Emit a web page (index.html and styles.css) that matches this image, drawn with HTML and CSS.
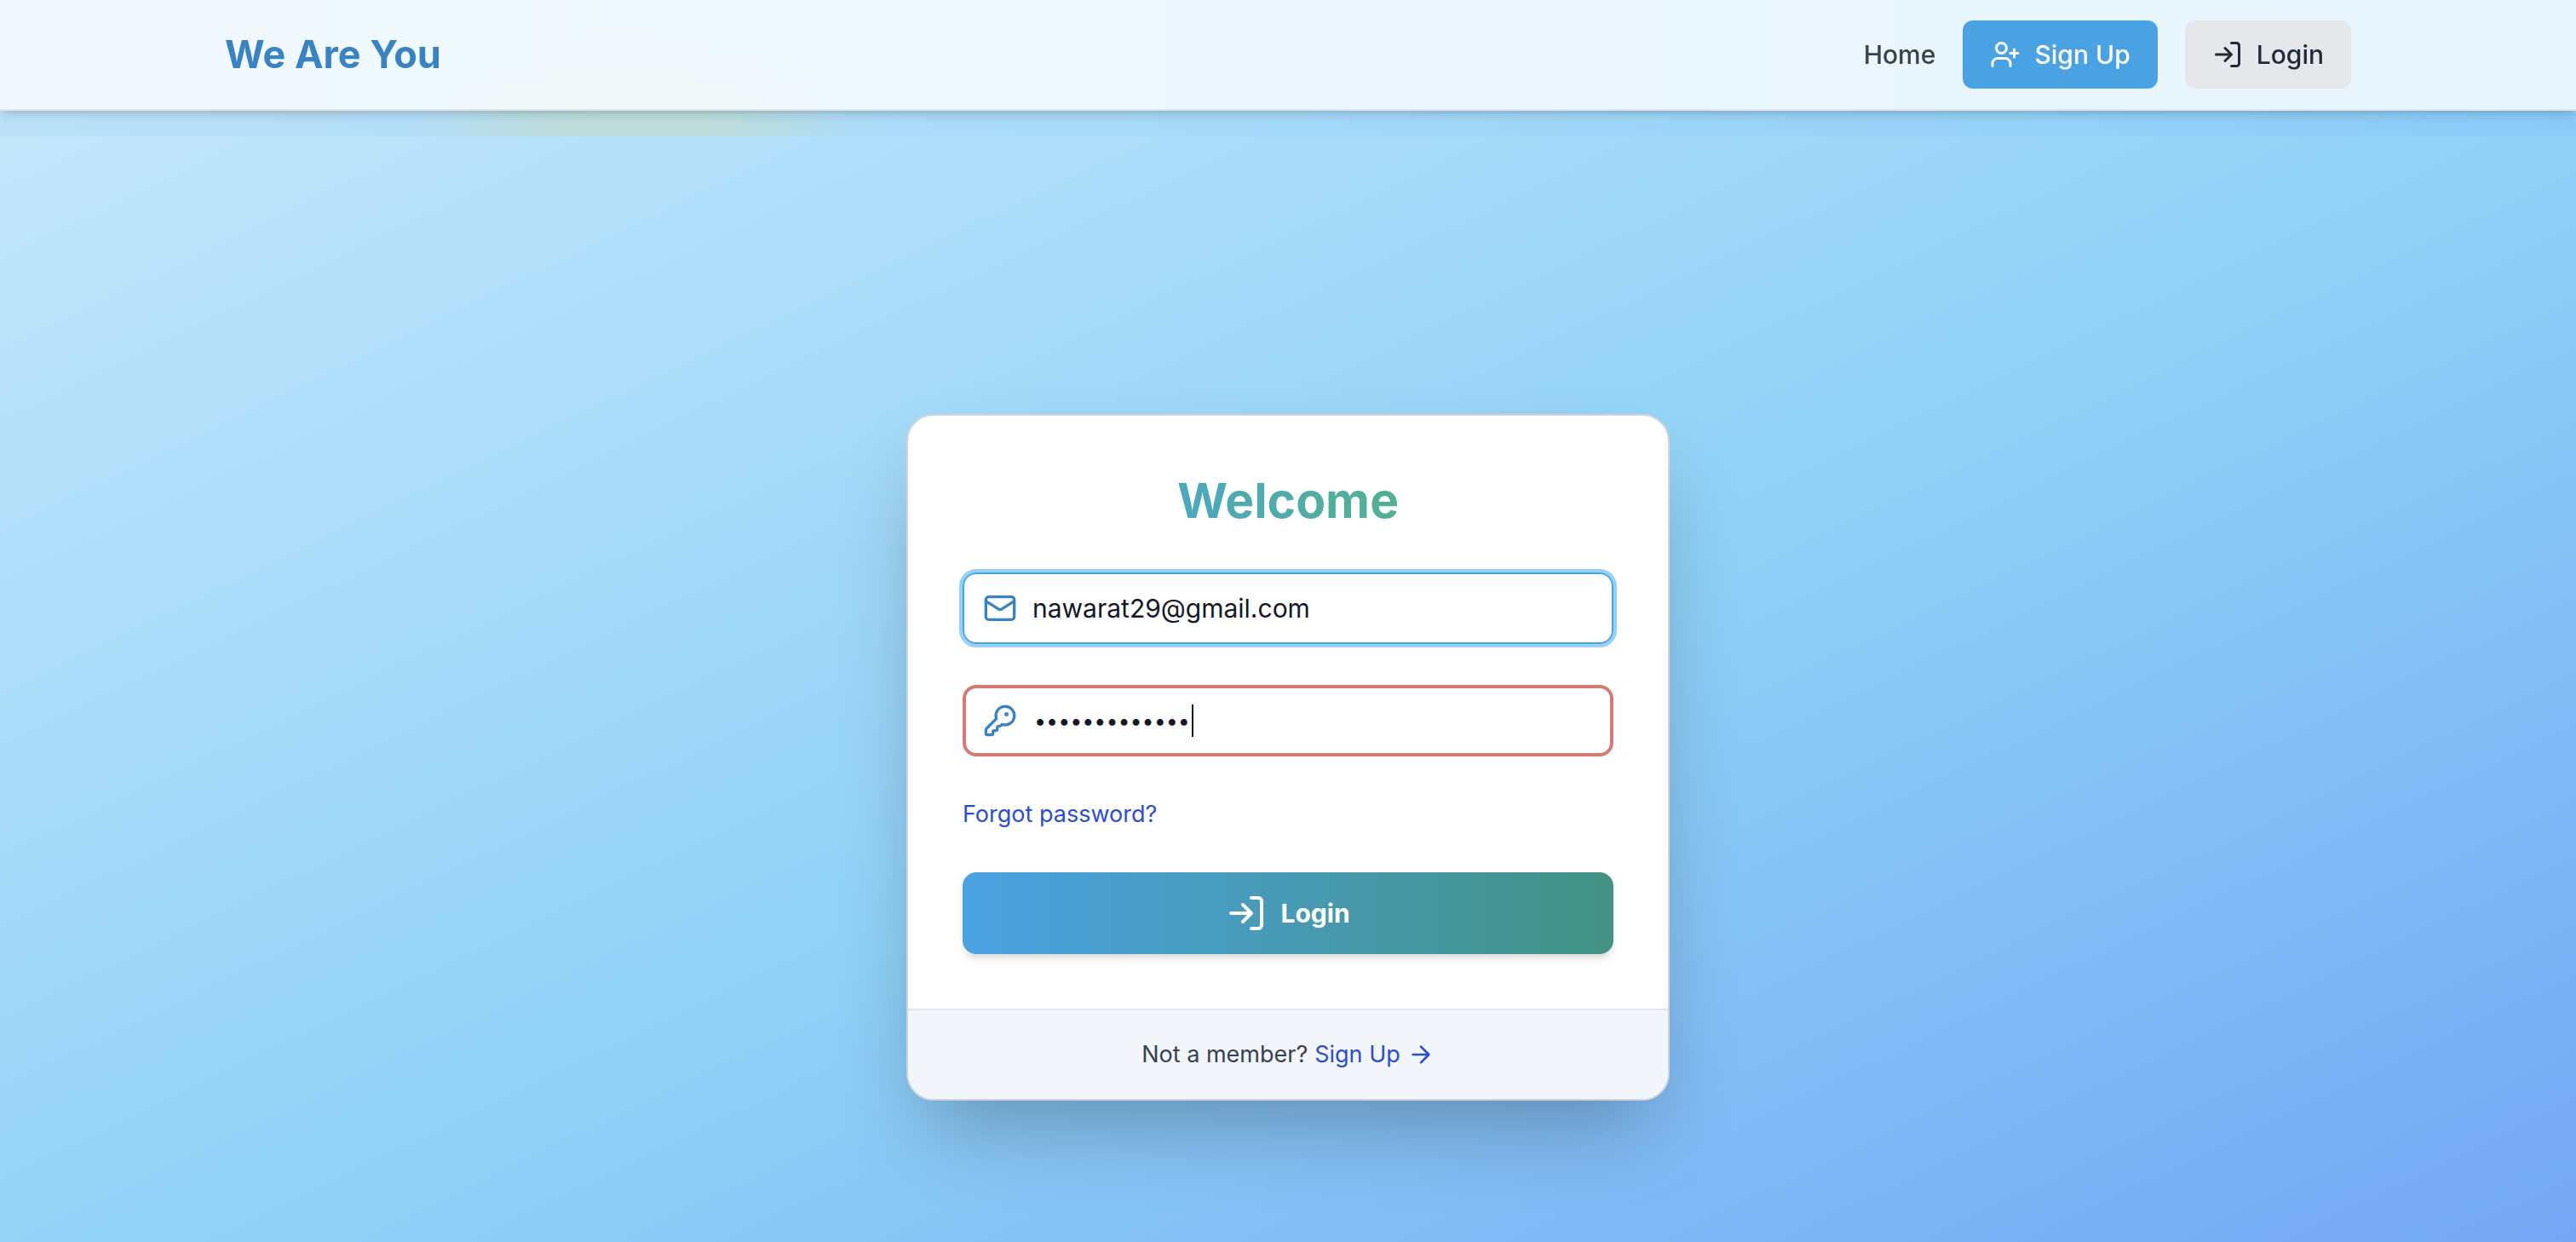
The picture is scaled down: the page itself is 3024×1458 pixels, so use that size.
FILE: index.html
```html
<!DOCTYPE html>
<html lang="en">
<head>
<meta charset="utf-8">
<meta name="viewport" content="width=device-width, initial-scale=1">
<title>We Are You – Login</title>
<link rel="stylesheet" href="styles.css">
</head>
<body>
<div class="backdrop" aria-hidden="true"></div>
<header class="site-header">
  <div class="site-header-inner">
    <a class="brand" href="#">We Are You</a>
    <nav class="nav">
      <a class="nav-link" href="#">Home</a>
      <a class="btn btn-primary" href="#">
        <svg class="icon icon-md" viewBox="0 0 24 24" aria-hidden="true"><path d="M16 21v-2a4 4 0 0 0-4-4H6a4 4 0 0 0-4 4v2"/><circle cx="9" cy="7" r="4"/><path d="M19 8v6M22 11h-6"/></svg>
        <span>Sign Up</span>
      </a>
      <a class="btn btn-muted" href="#">
        <svg class="icon icon-md" viewBox="0 0 24 24" aria-hidden="true"><path d="M15 3h4a2 2 0 0 1 2 2v14a2 2 0 0 1-2 2h-4"/><path d="M10 17l5-5-5-5M15 12H3"/></svg>
        <span>Login</span>
      </a>
    </nav>
  </div>
</header>
<main class="page">
  <section class="card">
    <form class="card-body">
      <h1 class="title">Welcome</h1>
      <div class="field">
        <svg class="icon icon-lg field-icon" viewBox="0 0 24 24" aria-hidden="true"><rect x="2" y="4" width="20" height="16" rx="2"/><path d="m22 7-8.97 5.7a1.94 1.94 0 0 1-2.06 0L2 7"/></svg>
        <input class="input input-active" type="email" aria-label="Email" value="nawarat29@gmail.com">
      </div>
      <div class="field">
        <svg class="icon icon-lg field-icon" viewBox="0 0 24 24" aria-hidden="true"><path d="M2.586 17.414A2 2 0 0 0 2 18.828V21a1 1 0 0 0 1 1h3a1 1 0 0 0 1-1v-1a1 1 0 0 1 1-1h1a1 1 0 0 0 1-1v-1a1 1 0 0 1 1-1h.172a2 2 0 0 0 1.414-.586l.814-.814a6.5 6.5 0 1 0-4-4z"/><circle cx="16.5" cy="7.5" r=".5" fill="currentColor"/></svg>
        <input class="input input-invalid" type="password" aria-label="Password" value="abcdefghijklm">
        <span class="caret"></span>
      </div>
      <a class="link forgot" href="#">Forgot password?</a>
      <button class="submit" type="button">
        <svg class="icon icon-xl" viewBox="0 0 24 24" aria-hidden="true"><path d="M15 3h4a2 2 0 0 1 2 2v14a2 2 0 0 1-2 2h-4"/><path d="M10 17l5-5-5-5M15 12H3"/></svg>
        <span>Login</span>
      </button>
    </form>
    <footer class="card-footer">
      <span>Not a member?</span>
      <a class="link signup" href="#">Sign Up
        <svg class="icon icon-sm" viewBox="0 0 24 24" aria-hidden="true"><path d="M5 12h14M12 5l7 7-7 7"/></svg>
      </a>
    </footer>
  </section>
</main>
</body>
</html>
```
FILE: styles.css
```css
*,
*::before,
*::after {
  box-sizing: border-box;
}

body {
  margin: 0;
  padding-top: 160px;
  font-family: Inter, "Noto Sans", sans-serif;
  font-size: 30px;
  line-height: 48px;
  color: #374151;
  background: #8fd0f7;
}

a {
  color: inherit;
  text-decoration: none;
}

.icon {
  flex: none;
  fill: none;
  stroke: currentColor;
  stroke-width: 2;
  stroke-linecap: round;
  stroke-linejoin: round;
}

.icon-sm { width: 32px; height: 32px; }
.icon-md { width: 36px; height: 36px; }
.icon-lg { width: 40px; height: 40px; }
.icon-xl { width: 48px; height: 48px; }

/* Strip that shows behind the translucent header */
.backdrop {
  position: absolute;
  inset: 0 0 auto;
  height: 160px;
  background:
    radial-gradient(ellipse 270px 140px at 750px 180px, rgba(196, 220, 200, 0.7), rgba(196, 220, 200, 0.6) 40%, rgba(196, 220, 200, 0)),
    linear-gradient(to right, #bce1f9, #a5d9f9 50%, #8acbf8);
}

.site-header {
  position: fixed;
  inset: 0 0 auto;
  z-index: 10;
  background: rgba(255, 255, 255, 0.8);
  border-bottom: 2px solid #e2e5ea;
  box-shadow: 0 8px 12px -2px rgba(0, 0, 0, 0.1), 0 4px 8px -4px rgba(0, 0, 0, 0.15);
}

.site-header-inner {
  display: flex;
  align-items: center;
  justify-content: space-between;
  max-width: 2560px;
  margin: 0 auto;
  padding: 24px 32px;
}

.brand {
  font-size: 45px;
  line-height: 64px;
  font-weight: 700;
  color: #3a83c3;
}

.nav {
  display: flex;
  align-items: center;
  gap: 32px;
  font-weight: 500;
}

.btn {
  display: flex;
  align-items: center;
  gap: 16px;
  padding: 16px 32px;
  border-radius: 12px;
}

.btn-primary {
  color: #fff;
  background: #4ba2e3;
}

.btn-muted {
  color: #1f2937;
  background: #e5e7eb;
}

.page {
  position: relative;
  display: flex;
  align-items: center;
  justify-content: center;
  min-height: 100vh;
  background: linear-gradient(to bottom right, #c3e6fb, #8fd1f7 50%, #70a2f4);
}

.card {
  width: 100%;
  max-width: 896px;
  overflow: hidden;
  background: #fff;
  border: 2px solid #d1d5db;
  border-radius: 32px;
  box-shadow: 0 50px 100px -24px rgba(0, 0, 0, 0.28);
}

.card-body {
  display: flex;
  flex-direction: column;
  gap: 48px;
  padding: 64px;
}

.title {
  margin: 0;
  font-size: 57px;
  line-height: 72px;
  font-weight: 700;
  text-align: center;
  color: transparent;
  background: linear-gradient(to right, #45a0ea, #5ab866);
  background-clip: text;
}

.field {
  position: relative;
  display: flex;
  color: #111827;
}

.field-icon {
  position: absolute;
  top: 22px;
  left: 24px;
  color: #3a83c3;
}

.input {
  width: 100%;
  height: 84px;
  padding: 0 32px 0 80px;
  font: inherit;
  color: inherit;
  background: transparent;
  border: 2px solid #d1d5db;
  border-radius: 16px;
  outline: none;
}

.input-active {
  border-color: #4ba2e3;
  box-shadow: 0 0 0 4px #93d1f8;
}

.input-invalid {
  padding-left: 80px;
  font-size: 25px;
  border: 4px solid #d77a74;
}

.caret {
  position: absolute;
  top: 23px;
  left: 269px;
  width: 2px;
  height: 38px;
  background: #111827;
}

.link {
  color: #2b4ed0;
}

.forgot {
  align-self: flex-start;
  font-size: 27px;
  line-height: 40px;
}

.submit {
  display: flex;
  align-items: center;
  justify-content: center;
  gap: 16px;
  padding: 24px;
  font: inherit;
  font-weight: 700;
  color: #fff;
  background: linear-gradient(to right, #4ba2e3, #439284);
  border: 0;
  border-radius: 16px;
  box-shadow: 0 8px 12px -2px rgba(0, 0, 0, 0.1), 0 4px 8px -4px rgba(0, 0, 0, 0.1);
}

.card-footer {
  display: flex;
  align-items: center;
  justify-content: center;
  gap: 8px;
  padding: 32px;
  font-size: 27px;
  line-height: 40px;
  background: #f2f5fa;
  border-top: 2px solid #e2e5ea;
}

.signup {
  display: flex;
  align-items: center;
  gap: 8px;
}
```
